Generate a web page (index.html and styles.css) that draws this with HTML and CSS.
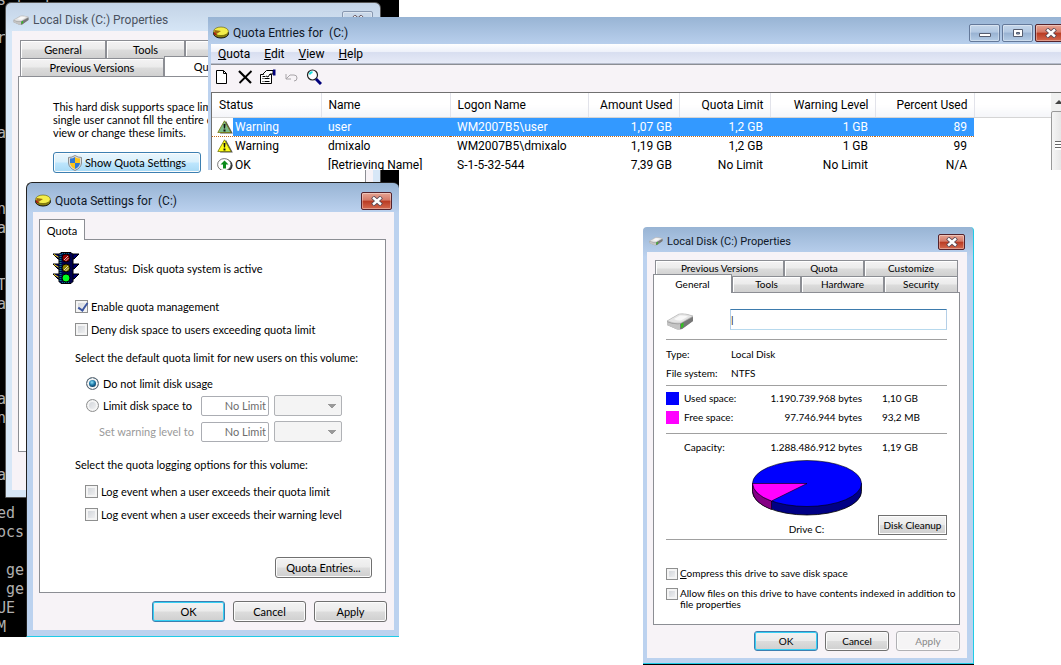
FILE: index.html
```html
<!DOCTYPE html>
<html lang="en">
<head>
    <meta charset="UTF-8">
    <meta name="viewport" content="width=device-width, initial-scale=1.0">
    <title>Quota Entries</title>
    <link rel="stylesheet" href="styles.css">
</head>
<body>
<!-- shared icons -->
<svg class="symbols" aria-hidden="true">
    <symbol id="icon-pie" viewBox="0 0 16 12">
        <ellipse cx="8" cy="7" rx="7.5" ry="4.500" fill="#8a8210" stroke="#111"/>
        <ellipse cx="8" cy="4.800" rx="7.400" ry="4.300" fill="#f4ee4a" stroke="#5a5500" stroke-width=".6"/>
        <path d="M8 4.600 L1.500 3.400 Q.6 5.600 3.500 7.600 Z" fill="#9a6a10"/>
        <path d="M1 5.500v2l2.500 1.500V7.500z" fill="#b01010"/>
    </symbol>
    <symbol id="icon-drive" viewBox="0 0 28 18">
        <path d="M1 8 L13 1 Q19 0 27 3 V8 L16 16 Q14 17 10 16 L1 12 Z" fill="#9b9b9b"/>
        <path d="M1 8 L13 1 Q19 0 27 3 L15 10 Q8 11 1 8Z" fill="#e4e4e4" stroke="#b8b8b8" stroke-width=".6"/>
        <path d="M8 6 L14 2.500 Q18 2 22 3.500 L15 7.500 Q11 8 8 6Z" fill="#f8f8f8"/>
        <path d="M1 9 Q8 12 14 11 V16 Q12 17 10 16 L1 12Z" fill="#c4c4c4"/>
        <path d="M14 11 L27 4 V8 L16 16 L14 16Z" fill="#777"/>
        <path d="M15 11l2.500-1.500v4l-2.500 1.800z" fill="#2fc41e"/>
    </symbol>
    <symbol id="icon-close" viewBox="0 0 12 10">
        <path d="M1.500 1 L10.500 9 M10.500 1 L1.500 9" stroke="#5a4a55" stroke-width="4.200"/>
        <path d="M2 1.500 L10 8.500 M10 1.500 L2 8.500" stroke="#fff" stroke-width="2.400"/>
    </symbol>
    <symbol id="icon-warning" viewBox="0 0 16 14">
        <path d="M9 1 L15.800 13.500 H3z" fill="#555"/>
        <path d="M7.500 .8 L14 12.500 H.8 Z" fill="currentColor" stroke="#77770a" stroke-width=".8"/>
        <path d="M6.500 4h2l-.4 4.500h-1.200z M6.500 9.500h2v2h-2z" fill="#111"/>
    </symbol>
    <symbol id="icon-ok" viewBox="0 0 16 14">
        <ellipse cx="8.600" cy="7.500" rx="7" ry="6.300" fill="#333"/>
        <ellipse cx="7.300" cy="6.600" rx="6.700" ry="6" fill="#fff" stroke="#555" stroke-width=".8"/>
        <path d="M7.500 2.500 L11.500 6.500 H9 V10.500 H6 V6.500 H3.500 Z" fill="#0a8a1a"/>
    </symbol>
</svg>

<main class="desktop">
<pre class="console">s.l  1.

r




a



n
a


T
a




a
n


a

ed
ocs

 ge
 ge
UE
M</pre>

<!-- Local Disk properties, Quota tab -->
<section class="window disk-back inactive">
    <header class="titlebar">
        <svg class="title-icon"><use href="#icon-drive"/></svg>
        <h2>Local Disk (C:) Properties</h2>
        <button class="close" aria-label="Close"><svg><use href="#icon-close"/></svg></button>
    </header>
    <div class="window-body">
        <div class="tab-row">
            <button class="tab general">General</button>
            <button class="tab tools">Tools</button>
            <button class="tab rest" aria-label="Hardware"></button>
        </div>
        <div class="tab-row">
            <button class="tab previous">Previous Versions</button>
            <button class="tab active">Quota</button>
        </div>
        <div class="panel">
            <p>This hard disk supports space limits so that a<br>single user cannot fill the entire disk. You can<br>view or change these limits.</p>
            <button class="btn shield-button">
                <svg viewBox="0 0 14 16">
                    <path d="M7 .5 Q10 2.500 13.500 2.500 V8 Q13 13 7 15.500 Q1 13 .5 8 V2.500 Q4 2.500 7 .5Z" fill="#ddd" stroke="#777" stroke-width=".8"/>
                    <path d="M7 2 V8 H2 V3.600 Q5 3.500 7 2Z M7 8 H12 Q11.500 12 7 14Z" fill="#2f78d4"/>
                    <path d="M7 2 Q9 3.500 12 3.600 V8 H7Z M7 8 V14 Q2.500 12 2 8Z" fill="#fcc419"/>
                </svg>
                Show Quota Settings
            </button>
        </div>
    </div>
</section>

<!-- Quota entries list -->
<section class="window entries">
    <header class="titlebar">
        <svg class="title-icon"><use href="#icon-pie"/></svg>
        <h2>Quota Entries for &nbsp;(C:)</h2>
        <div class="window-buttons">
            <button class="caption" aria-label="Minimize"><svg viewBox="0 0 12 10"><path d="M.5 5.500h11v3h-11z" fill="#fff" stroke="#555d70"/></svg></button>
            <button class="caption" aria-label="Maximize"><svg viewBox="0 0 12 10"><path d="M1.500 1.500h9v7h-9z" fill="#fff" stroke="#555d70"/><path d="M4.500 4.500h3v1.500h-3z" fill="#8ba8cc" stroke="#555d70"/></svg></button>
            <button class="close" aria-label="Close"><svg><use href="#icon-close"/></svg></button>
        </div>
    </header>
    <nav class="menubar">
        <a href="#"><u>Q</u>uota</a>
        <a href="#"><u>E</u>dit</a>
        <a href="#"><u>V</u>iew</a>
        <a href="#"><u>H</u>elp</a>
    </nav>
    <div class="toolbar">
        <button aria-label="New"><svg viewBox="0 0 16 16"><path d="M2.500 1.500h7l3 3v10h-10z" fill="#fff" stroke="#000"/><path d="M9.500 1.500v3h3" fill="none" stroke="#000"/></svg></button>
        <button aria-label="Delete"><svg viewBox="0 0 16 16"><path d="M2 2 L14 14" stroke="#000" stroke-width="2.200"/><path d="M14.500 2 L2.500 14" stroke="#000" stroke-width="1.800"/></svg></button>
        <button aria-label="Properties"><svg viewBox="0 0 16 16"><path d="M.5 5.500h11v9H.5z" fill="#fff" stroke="#000"/><path d="M2.500 9.500h1m1 0h5M2.500 12.500h1m1 0h5M2.500 7.500h3" stroke="#000"/><path d="M3 5 L6.500 1.500 H13 V5 H10 L8 8 L6 7" fill="#fff" stroke="#000"/><path d="M13 .5h2.500v6H13z" fill="#00007b"/></svg></button>
        <button aria-label="Undo" disabled><svg viewBox="0 0 16 16"><path d="M3 5v5h5M3 10l4-4h4q3 0 3 3t-3 3" fill="none" stroke="#a8a4a8"/></svg></button>
        <button aria-label="Find"><svg viewBox="0 0 16 16"><circle cx="6.500" cy="6" r="5" fill="#fff" stroke="#222" stroke-width="1.200"/><path d="M3.500 5.500 Q4 3.500 6.500 3" fill="none" stroke="#1de0e0" stroke-width="1.800"/><path d="M10 10l5 5" stroke="#00007b" stroke-width="3"/></svg></button>
    </div>
    <div class="list-area">
        <table>
            <thead>
                <tr>
                    <th class="status">Status</th>
                    <th class="name">Name</th>
                    <th class="logon">Logon Name</th>
                    <th class="amount num">Amount Used</th>
                    <th class="limit num">Quota Limit</th>
                    <th class="level num">Warning Level</th>
                    <th class="percent num">Percent Used</th>
                    <th></th>
                </tr>
            </thead>
            <tbody>
                <tr class="selected">
                    <td><span class="status-cell"><svg class="blue"><use href="#icon-warning"/></svg>Warning</span></td>
                    <td>user</td>
                    <td>WM2007B5\user</td>
                    <td class="num">1,07 GB</td>
                    <td class="num">1,2 GB</td>
                    <td class="num">1 GB</td>
                    <td class="num">89</td>
                    <td></td>
                </tr>
                <tr>
                    <td><span class="status-cell"><svg><use href="#icon-warning"/></svg>Warning</span></td>
                    <td>dmixalo</td>
                    <td>WM2007B5\dmixalo</td>
                    <td class="num">1,19 GB</td>
                    <td class="num">1,2 GB</td>
                    <td class="num">1 GB</td>
                    <td class="num">99</td>
                    <td></td>
                </tr>
                <tr>
                    <td><span class="status-cell"><svg><use href="#icon-ok"/></svg>OK</span></td>
                    <td>[Retrieving Name]</td>
                    <td>S-1-5-32-544</td>
                    <td class="num">7,39 GB</td>
                    <td class="num">No Limit</td>
                    <td class="num">No Limit</td>
                    <td class="num">N/A</td>
                    <td></td>
                </tr>
            </tbody>
        </table>
        <div class="scrollbar">
            <svg viewBox="0 0 16 16"><path d="M4 10l4-4 4 4z" fill="#444"/></svg>
            <div class="thumb"></div>
        </div>
    </div>
</section>

<!-- Quota settings dialog -->
<section class="window settings">
    <header class="titlebar">
        <svg class="title-icon"><use href="#icon-pie"/></svg>
        <h2>Quota Settings for &nbsp;(C:)</h2>
        <button class="close" aria-label="Close"><svg><use href="#icon-close"/></svg></button>
    </header>
    <div class="window-body">
        <div class="tab-row">
            <button class="tab active">Quota</button>
        </div>
        <form class="panel">
            <div class="status-line">
                <svg viewBox="0 0 26 32">
                    <path d="M0 2h26l-5 5H5z M0 12h26l-5 5H5z M0 22h26l-5 5H5z" fill="#000078" stroke="#000"/>
                    <path d="M1 2.500l5 3M1 12.500l5 3M1 22.500l5 3" stroke="#ffe000"/>
                    <path d="M8 .5h10l2 2v27l-2 2H8l-2-2v-27z" fill="#00004e" stroke="#000"/>
                    <path d="M7.500 2v28" stroke="#008080" stroke-width="2" stroke-dasharray="1 1"/>
                    <path d="M9 1.500h8M9 30.500h8" stroke="#008080" stroke-dasharray="1 1"/>
                    <circle cx="13" cy="6" r="4" fill="#900000" stroke="#000"/>
                    <circle cx="13" cy="16" r="4" fill="#8a8000" stroke="#000"/>
                    <circle cx="13" cy="26" r="4" fill="#00ff20" stroke="#000"/>
                    <path d="M11 8l4-4M12.500 9l3-3M11 18l4-4M12.500 19l3-3" stroke="#eee" stroke-width=".8"/>
                </svg>
                <span>Status: &nbsp;Disk quota system is active</span>
            </div>
            <label class="option"><input type="checkbox" checked>Enable quota management</label>
            <label class="option"><input type="checkbox">Deny disk space to users exceeding quota limit</label>
            <p class="group-title">Select the default quota limit for new users on this volume:</p>
            <label class="option radio"><input type="radio" name="limit" checked>Do not limit disk usage</label>
            <div class="limit-row">
                <label class="option radio"><input type="radio" name="limit">Limit disk space to</label>
                <input type="text" value="No Limit" aria-label="Disk space limit" disabled>
                <select aria-label="Disk space unit" disabled><option></option></select>
            </div>
            <div class="limit-row">
                <label class="disabled" for="warning-level">Set warning level to</label>
                <input type="text" id="warning-level" value="No Limit" disabled>
                <select aria-label="Warning level unit" disabled><option></option></select>
            </div>
            <p class="group-title">Select the quota logging options for this volume:</p>
            <label class="option log"><input type="checkbox">Log event when a user exceeds their quota limit</label>
            <label class="option log"><input type="checkbox">Log event when a user exceeds their warning level</label>
            <button type="button" class="btn entries-button">Quota Entries...</button>
        </form>
        <footer class="dialog-buttons">
            <button class="btn default">OK</button>
            <button class="btn">Cancel</button>
            <button class="btn">Apply</button>
        </footer>
    </div>
</section>
</main>

<!-- Local Disk properties, General tab -->
<section class="window disk-front">
    <header class="titlebar">
        <svg class="title-icon"><use href="#icon-drive"/></svg>
        <h2>Local Disk (C:) Properties</h2>
        <button class="close" aria-label="Close"><svg><use href="#icon-close"/></svg></button>
    </header>
    <div class="window-body">
        <div class="tab-row">
            <button class="tab previous">Previous Versions</button>
            <button class="tab quota">Quota</button>
            <button class="tab rest">Customize</button>
        </div>
        <div class="tab-row">
            <button class="tab active">General</button>
            <button class="tab tools">Tools</button>
            <button class="tab hardware">Hardware</button>
            <button class="tab rest">Security</button>
        </div>
        <form class="panel">
            <div class="volume">
                <svg><use href="#icon-drive"/></svg>
                <input type="text" value="|" aria-label="Volume label">
            </div>
            <dl class="facts">
                <dt>Type:</dt><dd>Local Disk</dd>
                <dt>File system:</dt><dd>NTFS</dd>
            </dl>
            <table class="space">
                <tr><td class="key"><i class="used"></i></td><th>Used space:</th><td class="num">1.190.739.968 bytes</td><td class="size">1,10 GB</td></tr>
                <tr><td class="key"><i class="free"></i></td><th>Free space:</th><td class="num">97.746.944 bytes</td><td class="size">93,2 MB</td></tr>
            </table>
            <table class="space capacity">
                <tr><td class="key"></td><th>Capacity:</th><td class="num">1.288.486.912 bytes</td><td class="size">1,19 GB</td></tr>
            </table>
            <div class="chart">
                <figure>
                    <svg viewBox="0 0 110 56">
                        <path d="M.5 23.500 V31.500 A54.500 23.500 0 0 0 109.500 31.500 V23.500Z" fill="#000084" stroke="#000" stroke-width=".8"/>
                        <path d="M.5 23.500 V31.500 Q2 43 19.500 49.500 V41Z" fill="#840084" stroke="#000" stroke-width=".6"/>
                        <ellipse cx="55" cy="23.500" rx="54.500" ry="23" fill="#00f" stroke="#000" stroke-width=".6"/>
                        <path d="M55 23.500 H.5 Q1.500 34.500 19.500 41 Z" fill="#f0f" stroke="#000" stroke-width=".6"/>
                    </svg>
                    <figcaption>Drive C:</figcaption>
                </figure>
                <button type="button" class="btn">Disk Cleanup</button>
            </div>
            <label class="option"><input type="checkbox"><span><u>C</u>ompress this drive to save disk space</span></label>
            <label class="option"><input type="checkbox"><span>Allow files on this drive to have contents indexed in addition to<br>file properties</span></label>
        </form>
        <footer class="dialog-buttons">
            <button class="btn default">OK</button>
            <button class="btn">Cancel</button>
            <button class="btn" disabled>Apply</button>
        </footer>
    </div>
</section>
</body>
</html>
```

FILE: styles.css
```css
* {
    box-sizing: border-box;
}
body {
    margin: 0;
    background: #fff;
    color: #000;
    font: 11px/13px Lato, "Liberation Sans", sans-serif;
    overflow: hidden;
}
h2, p, dl, dd, figure {
    margin: 0;
}
button, input, select {
    margin: 0;
    padding: 0;
    font: inherit;
    color: inherit;
}
.symbols {
    position: absolute;
    width: 0;
    height: 0;
}
.desktop {
    width: 399px;
    height: 637px;
    background: #000;
}
.console {
    margin: 0;
    padding: 0;
    position: absolute;
    left: -3px;
    top: -9px;
    color: #b0b0b0;
    font: 15px/19px "DejaVu Sans Mono", monospace;
}

/* windows */
.window {
    position: absolute;
    padding: 0 5px 6px 6px;
    background: linear-gradient(#98b4d4, #bcd2ef 30px, #bcd2ef);
    border: 1px solid #222;
    border-radius: 6px 6px 0 0;
}
.titlebar {
    display: flex;
    align-items: center;
    height: 29px;
    padding: 6px 0 0 1px;
}
.titlebar h2 {
    flex: 1;
    margin-left: 4px;
    font: 12px/16px Roboto, "Open Sans", sans-serif;
    color: #101828;
    white-space: nowrap;
}
.title-icon {
    width: 16px;
    height: 13px;
}
.window-buttons {
    display: flex;
    gap: 2px;
}
.close, .caption {
    display: flex;
    align-items: center;
    justify-content: center;
    width: 31px;
    height: 18px;
    border: 1px solid #54232c;
    border-radius: 2px;
    background: linear-gradient(#e6a493, #d47a68 45%, #b83a22 50%, #d46a50);
    box-shadow: inset 0 0 0 1px rgba(255, 255, 255, .35);
}
.caption {
    border-color: #64799a;
    background: linear-gradient(#c4d6ea, #b2c8e2 45%, #98b2d2 50%, #b4cce6);
}
.close svg, .caption svg {
    width: 12px;
    height: 10px;
}
.window-body {
    background: #f7f3f7;
    padding: 7px;
}

/* tabs */
.tab-row {
    display: flex;
    padding: 0 2px;
}
.tab {
    height: 18px;
    border: 1px solid #8c8e94;
    border-bottom: 0;
    background: linear-gradient(#f4f3f4, #ebebeb 48%, #dcdcdc 52%, #d0d0d0);
    box-shadow: inset 1px 1px 0 #fff;
    text-align: center;
}
.tab.rest {
    flex: 1;
}
.tab.active {
    position: relative;
    background: #fff;
    box-shadow: none;
}
.panel {
    display: block;
    background: #fff;
    border: 1px solid #8c8e94;
}

/* buttons and fields */
.btn {
    height: 21px;
    border: 1px solid #707070;
    border-radius: 3px;
    background: linear-gradient(#f3f3f3, #ebebeb 48%, #dcdcdc 52%, #cfcfcf);
    box-shadow: inset 0 0 0 1px #fcfcfc;
    white-space: nowrap;
}
.btn.default {
    border-color: #3c7fb1;
    box-shadow: inset 0 0 0 1px #35d0f4;
}
.btn:disabled {
    border-color: #b0b0b4;
    background: #f5f4f5;
    color: #888;
}
.dialog-buttons {
    display: flex;
    justify-content: flex-end;
    gap: 8px;
    padding-top: 8px;
}
.dialog-buttons .btn {
    width: 73px;
}
.option {
    display: flex;
    align-items: center;
    gap: 3px;
    white-space: nowrap;
}
input[type="checkbox"], input[type="radio"] {
    flex: none;
    appearance: none;
    width: 13px;
    height: 13px;
    border: 1px solid #8e8f8f;
    background: linear-gradient(135deg, #cbcfd5, #f6f6f6);
    box-shadow: inset 0 0 0 2px #f4f4f4;
}
input[type="checkbox"]:checked::after {
    content: "";
    display: block;
    width: 4px;
    height: 8px;
    margin: 0 0 0 4px;
    border: solid #3c56a0;
    border-width: 0 2px 2px 0;
    transform: rotate(35deg);
}
input[type="radio"] {
    border-radius: 50%;
}
input[type="radio"]:checked {
    border-color: #5f6a74;
    background: radial-gradient(circle at 45% 40%, #8fe2f8, #1d78a8 30%, #0b3a5c 55%);
}
input[type="text"] {
    border: 1px solid #abadb3;
    background: #fff;
}
select {
    appearance: none;
    border: 1px solid #b0b2b6;
    border-radius: 2px;
    background:
        linear-gradient(to bottom right, #999 50%, transparent 51%) right 5px center / 4px 4px no-repeat,
        linear-gradient(to bottom left, #999 50%, transparent 51%) right 9px center / 4px 4px no-repeat,
        #f4f4f4;
    opacity: 1;
}

/* Local Disk, Quota tab */
.disk-back {
    left: 5px;
    top: 2px;
    width: 376px;
    padding: 0 7px 7px 6px;
}
.inactive {
    background: linear-gradient(#c3d3e6, #d7e7f7 30px, #d7e7f7);
    border-color: #555;
}
.inactive h2 {
    color: #4a5260;
}
.inactive .close {
    border-color: #8898b0;
    background: #c9d8e9;
}
.disk-back .titlebar {
    height: 28px;
}
.disk-back .window-body {
    padding: 9px 7px 38px 6px;
}
.disk-back .general {
    width: 86px;
}
.disk-back .tools {
    width: 79px;
}
.disk-back .previous {
    width: 144px;
}
.disk-back .tab.active {
    width: 90px;
    height: 20px;
    margin: -2px 0 0;
}
.disk-back .panel {
    height: 376px;
    padding: 23px 34px;
    white-space: nowrap;
}
.shield-button {
    display: flex;
    align-items: center;
    justify-content: center;
    gap: 3px;
    width: 148px;
    margin-top: 13px;
    border-color: #3c7fb1;
    background: linear-gradient(#eaf6fd, #d9f0fc 48%, #bee6fd 52%, #a7d9f5);
}
.shield-button svg {
    width: 14px;
    height: 16px;
}

/* Quota entries */
.entries {
    left: 208px;
    right: 0;
    top: 17px;
    height: 153px;
    padding: 0 0 0 3px;
    border: 0;
    border-radius: 0;
    overflow: hidden;
    font: 12px/16px Roboto, "Open Sans", sans-serif;
}
.entries .titlebar {
    height: 27px;
    padding: 4px 0 0 2px;
}
.entries .window-buttons {
    margin-right: -5px;
}
.menubar {
    display: flex;
    gap: 14px;
    height: 20px;
    padding: 2px 7px;
    background: linear-gradient(#fff, #eef1fa 40%, #d8def0 45%, #e6eaf7);
    border-bottom: 1px solid #b6bccc;
}
.menubar a {
    color: #000;
    text-decoration: none;
}
.toolbar {
    display: flex;
    gap: 7px;
    height: 29px;
    padding: 4px 3px;
    background: #f7f3f7;
    border-top: 1px solid #8c8e94;
    border-bottom: 1px solid #707070;
}
.toolbar button {
    width: 16px;
    height: 16px;
    border: 0;
    background: none;
}
.toolbar svg {
    display: block;
    width: 16px;
    height: 16px;
}
.list-area {
    display: flex;
    align-items: flex-start;
    height: 77px;
    border-left: 1px solid #707070;
    background: #fff;
}
.list-area table {
    flex: 1;
    table-layout: fixed;
    border-collapse: collapse;
}
.list-area th {
    height: 24px;
    padding: 0 6px 0 7px;
    border-right: 1px solid #e2e3ea;
    border-bottom: 1px solid #d5d5d5;
    background: linear-gradient(#fff 50%, #f4f5f9);
    font-weight: normal;
    text-align: left;
}
.list-area th:last-child {
    border-right: 0;
}
.list-area td {
    height: 19px;
    padding: 0 7px;
    white-space: nowrap;
}
.list-area td:first-child {
    padding: 0 0 0 5px;
}
.list-area .num {
    text-align: right;
}
.status {
    width: 109px;
}
.name {
    width: 129px;
}
.logon {
    width: 138px;
}
.amount, .limit {
    width: 91px;
}
.level {
    width: 105px;
}
.percent {
    width: 99px;
}
.status-cell {
    display: flex;
    align-items: center;
    gap: 2px;
}
.status-cell svg {
    width: 16px;
    height: 14px;
    color: #ffff18;
}
.status-cell .blue {
    color: #7dbb88;
}
.selected {
    color: #fff;
}
.selected td {
    background: #3399ff;
    border-top: 1px dotted #c86a14;
    border-bottom: 1px dotted #c86a14;
}
.selected td:first-child {
    background: linear-gradient(to right, #fff 21px, #3399ff 21px);
}
.selected td:last-child {
    background: #fff;
    border: 0;
}
.scrollbar {
    width: 10px;
    height: 77px;
    background: #f0f0f0;
    overflow: hidden;
}
.scrollbar svg {
    display: block;
    width: 16px;
    height: 18px;
}
.thumb {
    width: 17px;
    height: 90px;
    border: 1px solid #999;
    border-radius: 2px;
    background:
        repeating-linear-gradient(#666 0 1px, #fff 1px 3px) 3px 29px / 10px 9px no-repeat,
        linear-gradient(to right, #f5f5f5, #ddd);
}

/* Quota settings */
.settings {
    left: 26px;
    top: 182px;
    width: 373px;
    padding: 0 5px 6px 6px;
    border-right: 0;
    border-bottom-color: #1fcbe6;
}
.settings .titlebar {
    padding: 6px 2px 0 2px;
}
.settings .window-body {
    padding: 7px 7px 8px 6px;
}
.settings .tab-row {
    padding: 0;
}
.settings .tab.active {
    width: 46px;
    height: 21px;
    margin-bottom: -1px;
}
.settings .panel {
    margin-right: 1px;
    padding: 12px 13px 14px;
}
.status-line {
    display: flex;
    align-items: center;
    gap: 15px;
    margin-bottom: 16px;
}
.status-line svg {
    width: 26px;
    height: 32px;
}
.settings .option {
    height: 13px;
    margin: 0 0 10px 22px;
}
.group-title {
    margin: 15px 0 13px 22px;
}
.settings .radio {
    margin: 0 0 5px 33px;
    gap: 4px;
}
.limit-row {
    display: grid;
    grid-template-columns: 143px 68px 68px;
    column-gap: 5px;
    align-items: center;
    height: 21px;
    margin-bottom: 5px;
}
.settings .limit-row .radio {
    margin-bottom: 0;
}
.limit-row input[type="text"] {
    width: 68px;
    height: 20px;
    padding: 0 2px;
    border-radius: 2px;
    color: #6d6d6d;
    text-align: right;
}
.limit-row select {
    height: 21px;
}
.limit-row .disabled {
    padding-left: 46px;
    color: #9a9a9a;
    white-space: nowrap;
}
.limit-row + .group-title {
    margin: 16px 0 14px 22px;
}
.settings .log {
    margin-left: 32px;
}
.entries-button {
    display: block;
    width: 97px;
    margin: 36px 0 0 auto;
}

/* Local Disk, General tab */
.disk-front {
    left: 643px;
    top: 227px;
    width: 331px;
    padding: 0 6px 5px 4px;
    border: 0;
    border-right: 1px solid #1fcbe6;
    border-bottom: 1px solid #1fcbe6;
    border-radius: 4px 4px 0 0;
    box-shadow: 0 1px 0 #000;
    font-size: 10px;
    line-height: 11px;
}
.disk-front .titlebar {
    height: 25px;
    padding: 4px 2px 0;
}
.disk-front .titlebar h2 {
    font-size: 11px;
}
.disk-front .title-icon {
    width: 14px;
    height: 9px;
}
.disk-front .close {
    width: 27px;
    height: 16px;
}
.disk-front .window-body {
    padding: 8px 7px 7px 6px;
}
.disk-front .tab {
    height: 16px;
}
.disk-front .previous {
    width: 129px;
}
.disk-front .quota {
    width: 80px;
}
.disk-front .tab.active {
    width: 79px;
    height: 19px;
    margin: -2px 0 -1px -2px;
}
.disk-front .tools {
    width: 69px;
}
.disk-front .hardware {
    width: 83px;
}
.disk-front .panel {
    padding: 14px 12px 6px;
}
.volume {
    display: flex;
    align-items: center;
    justify-content: space-between;
    padding-bottom: 8px;
}
.volume svg {
    width: 28px;
    height: 18px;
    margin-top: 6px;
}
.volume input {
    width: 217px;
    height: 21px;
    border-color: #3d7bad #b5cfe7 #b7d9ed;
}
.facts {
    display: grid;
    grid-template-columns: 65px 1fr;
    row-gap: 8px;
    padding: 9px 0 6px;
    border-top: 1px solid #a0a0a0;
}
.space {
    width: 100%;
    padding: 3px 0 6px;
    border-top: 1px solid #a0a0a0;
    border-spacing: 0;
}
.space th, .space td {
    height: 19px;
    padding: 0;
    font-weight: normal;
    text-align: left;
}
.space .key {
    width: 18px;
}
.space .num {
    width: 120px;
    text-align: right;
}
.space .size {
    width: 85px;
    padding-left: 20px;
}
.space i {
    display: block;
    width: 13px;
    height: 13px;
}
.used {
    background: #00f;
}
.free {
    background: #f0f;
}
.space.capacity {
    padding: 4px 0 3px;
}
.chart {
    display: grid;
    grid-template-columns: 1fr 110px 1fr;
    align-items: end;
    padding-bottom: 4px;
    border-bottom: 1px solid #a0a0a0;
    margin-bottom: 28px;
}
.chart figure {
    grid-column: 2;
    text-align: center;
}
.chart figure svg {
    display: block;
    width: 110px;
    height: 56px;
    margin-bottom: 8px;
}
.chart .btn {
    width: 69px;
    height: 20px;
    justify-self: end;
    border-radius: 0;
}
.disk-front .option {
    align-items: flex-start;
    gap: 2px;
    margin-bottom: 8px;
}
.disk-front .option input {
    width: 12px;
    height: 12px;
}
.disk-front .dialog-buttons {
    gap: 7px;
    padding-top: 6px;
}
.disk-front .dialog-buttons .btn {
    width: 64px;
    height: 20px;
}
```
